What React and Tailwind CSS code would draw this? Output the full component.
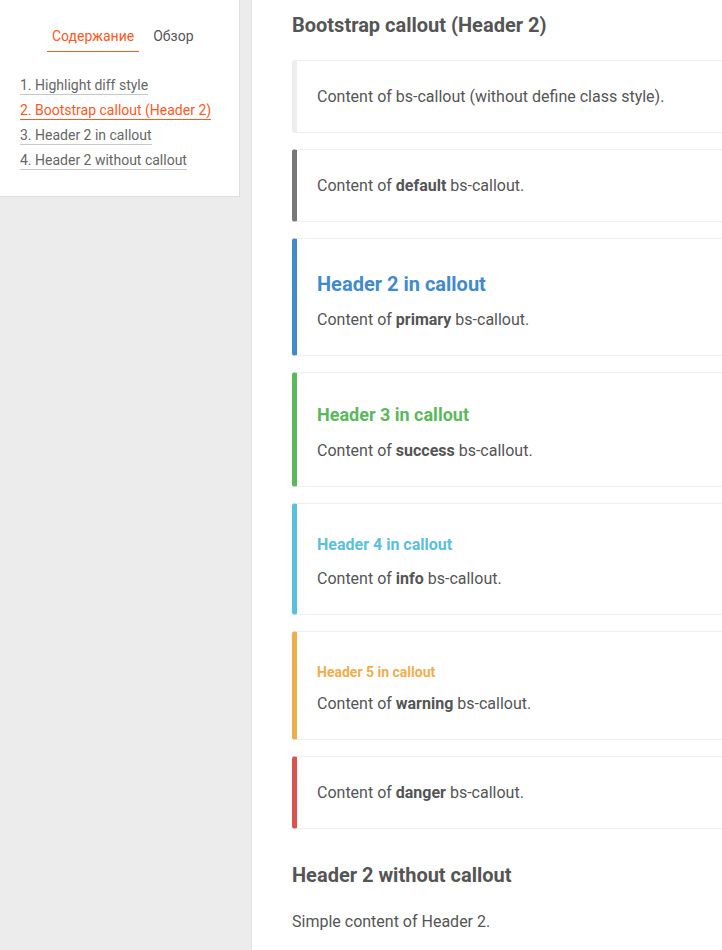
import React from "react";

const font = { fontFamily: "Roboto, 'Noto Sans', sans-serif" };

function Callout({ color, children }) {
  return (
    <div
      className="w-[520px] shrink-0 rounded-[3px] border border-[#eeeeee] border-l-[5px] pl-[20px] pr-5 py-[22px] text-[16px] leading-[27px] text-[#555]"
      style={{ borderLeftColor: color }}
    >
      {children}
    </div>
  );
}

export default function App() {
  const items = [
    { t: "1. Highlight diff style", active: false },
    { t: "2. Bootstrap callout (Header 2)", active: true },
    { t: "3. Header 2 in callout", active: false },
    { t: "4. Header 2 without callout", active: false },
  ];
  return (
    <div className="flex w-[722px] h-[950px] overflow-hidden bg-white" style={font}>
      <aside className="w-[252px] shrink-0 bg-[#ececec] border-r border-[#e3e3e3]">
        <div className="w-[240px] h-[197px] bg-white border-r border-b border-[#dedede]">
          <div className="flex pt-[26px] pl-[47px] gap-[14px] text-[14px]">
            <div className="px-[5px] h-[26px] leading-[20px] text-[#ff5722] border-b border-[#ff5722]">
              Содержание
            </div>
            <div className="h-[26px] leading-[20px] text-[#555]">Обзор</div>
          </div>
          <ul className="mt-[23px] pl-[20px] flex flex-col text-[14px]">
            {items.map((it) => (
              <li key={it.t} className="h-[25px]">
                <span
                  className={
                    "inline-block leading-[18px] border-b " +
                    (it.active
                      ? "text-[#ff5722] border-[#ff5722]"
                      : "text-[#666] border-[#c8c8c8]")
                  }
                >
                  {it.t}
                </span>
              </li>
            ))}
          </ul>
        </div>
      </aside>
      <main className="flex-1 pl-[40px] pt-[11px] text-[#555]">
        <h2 className="text-[20px] leading-[28px] font-bold text-[#555] mb-[21px]">
          Bootstrap callout (Header 2)
        </h2>
        <div className="flex flex-col gap-[16px]">
          <Callout color="#eeeeee">
            <p>Content of bs-callout (without define class style).</p>
          </Callout>
          <Callout color="#777777">
            <p>
              Content of <b className="font-bold">default</b> bs-callout.
            </p>
          </Callout>
          <Callout color="#428bca">
            <h2 className="mt-[11px] mb-[10px] text-[20px] leading-[24px] font-bold text-[#428bca]">
              Header 2 in callout
            </h2>
            <p>
              Content of <b className="font-bold">primary</b> bs-callout.
            </p>
          </Callout>
          <Callout color="#5cb85c">
            <h3 className="mt-[8px] mb-[10px] text-[18px] leading-[24px] font-bold text-[#5cb85c]">
              Header 3 in callout
            </h3>
            <p>
              Content of <b className="font-bold">success</b> bs-callout.
            </p>
          </Callout>
          <Callout color="#5bc0de">
            <h4 className="mt-[9px] mb-[10px] text-[16px] leading-[20px] font-bold text-[#5bc0de]">
              Header 4 in callout
            </h4>
            <p>
              Content of <b className="font-bold">info</b> bs-callout.
            </p>
          </Callout>
          <Callout color="#f0ad4e">
            <h5 className="mt-[9px] mb-[9px] text-[14px] leading-[18px] font-bold text-[#f0ad4e]">
              Header 5 in callout
            </h5>
            <p>
              Content of <b className="font-bold">warning</b> bs-callout.
            </p>
          </Callout>
          <Callout color="#d9534f">
            <p>
              Content of <b className="font-bold">danger</b> bs-callout.
            </p>
          </Callout>
        </div>
        <h2 className="mt-[32px] text-[20px] leading-[28px] font-bold text-[#555]">
          Header 2 without callout
        </h2>
        <p className="mt-[19px] text-[16px] leading-[27px] text-[#555]">
          Simple content of Header 2.
        </p>
      </main>
    </div>
  );
}
